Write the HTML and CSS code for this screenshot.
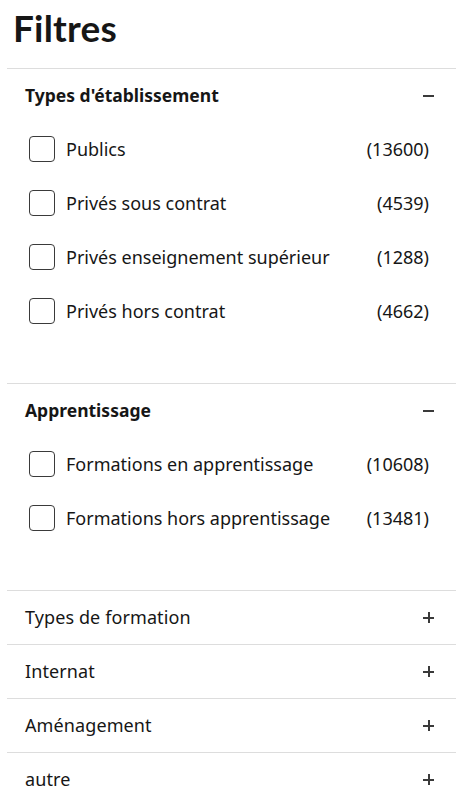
FILE: index.html
```html
<!DOCTYPE html>
<html lang="fr">
<head>
<meta charset="utf-8">
<link rel="stylesheet" href="styles.css">
</head>
<body>
<div class="panel">
  <h1 class="title">Filtres</h1>
  <section class="group open">
    <div class="group-head"><span class="group-name">Types d'établissement</span><span class="icon minus"></span></div>
    <ul class="options">
      <li class="option"><span class="box"></span><span class="label">Publics</span><span class="count">(13600)</span></li>
      <li class="option"><span class="box"></span><span class="label">Privés sous contrat</span><span class="count">(4539)</span></li>
      <li class="option"><span class="box"></span><span class="label">Privés enseignement supérieur</span><span class="count">(1288)</span></li>
      <li class="option"><span class="box"></span><span class="label">Privés hors contrat</span><span class="count">(4662)</span></li>
    </ul>
  </section>
  <section class="group open">
    <div class="group-head"><span class="group-name">Apprentissage</span><span class="icon minus"></span></div>
    <ul class="options">
      <li class="option"><span class="box"></span><span class="label">Formations en apprentissage</span><span class="count">(10608)</span></li>
      <li class="option"><span class="box"></span><span class="label">Formations hors apprentissage</span><span class="count">(13481)</span></li>
    </ul>
  </section>
  <section class="group">
    <div class="group-head"><span class="group-name">Types de formation</span><span class="icon plus"></span></div>
  </section>
  <section class="group">
    <div class="group-head"><span class="group-name">Internat</span><span class="icon plus"></span></div>
  </section>
  <section class="group">
    <div class="group-head"><span class="group-name">Aménagement</span><span class="icon plus"></span></div>
  </section>
  <section class="group">
    <div class="group-head"><span class="group-name">autre</span><span class="icon plus"></span></div>
  </section>
</div>
</body>
</html>
```
FILE: styles.css
```css
* { box-sizing: border-box; }
html, body { margin: 0; padding: 0; background: #fff; }
body {
  font-family: "Noto Sans", Lato, sans-serif;
  color: #161616;
}
.panel {
  margin-left: 7px;
  width: 449px;
}
.title {
  margin: 0;
  padding: 6px 0 0 6px;
  height: 68px;
  font-family: Lato, "Noto Sans", sans-serif;
  font-size: 37px;
  line-height: 44px;
  font-weight: 700;
  letter-spacing: 0.2px;
}
.group {
  border-top: 1px solid #dddddd;
}
.group.open {
  padding-bottom: 45px;
}
.group-head {
  height: 53px;
  display: flex;
  align-items: center;
  justify-content: space-between;
  padding: 0 22px 1px 18px;
  font-size: 18px;
  letter-spacing: 0.1px;
}
.open .group-head {
  font-weight: 700;
  font-size: 17.5px;
  letter-spacing: 0;
}
.options {
  list-style: none;
  margin: 0;
  padding: 0;
}
.option {
  height: 54px;
  display: flex;
  align-items: center;
  padding: 0 27px 0 22px;
  font-size: 18px;
}
.box {
  width: 26px;
  height: 26px;
  border: 1.5px solid #3a3a3a;
  border-radius: 4px;
  flex: none;
}
.label {
  margin-left: 11px;
  flex: 1;
}
.count {
  flex: none;
}
.icon {
  position: relative;
  width: 11px;
  height: 11px;
  flex: none;
}
.icon::before, .plus::after {
  content: "";
  position: absolute;
  background: #3a3a3a;
}
.icon::before {
  left: 0;
  top: 5px;
  width: 11px;
  height: 2px;
}
.plus::after {
  left: 4.5px;
  top: 0;
  width: 2px;
  height: 11px;
}
```
